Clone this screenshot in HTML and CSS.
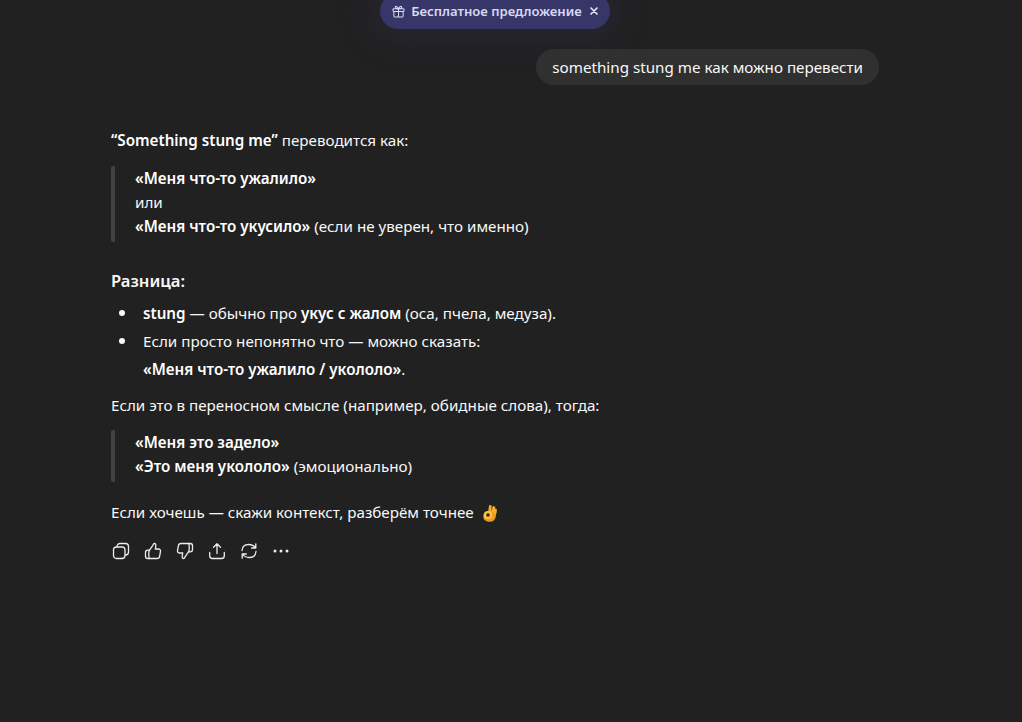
FILE: index.html
```html
<!DOCTYPE html>
<html lang="ru">
<head>
<meta charset="utf-8">
<title>Chat</title>
<link rel="stylesheet" href="styles.css">
</head>
<body>
<main class="page">
  <div class="promo">
    <svg class="promo-icon" viewBox="0 0 14 14" fill="none" stroke="currentColor" stroke-width="1.1" stroke-linecap="round" stroke-linejoin="round"><rect x="1" y="4" width="12" height="3" rx="1"/><path d="M2 7v4.500A1.500 1.500 0 0 0 3.500 13h7a1.500 1.500 0 0 0 1.500-1.500V7M7 4v9M7 4C6 1.500 3.500.5 3.500 2.300 3.500 3.500 5.500 4 7 4ZM7 4c1-2.500 3.500-3.500 3.500-1.700C10.500 3.500 8.500 4 7 4Z"/></svg>
    <span class="promo-text">Бесплатное предложение</span>
    <svg class="promo-close" viewBox="0 0 8 8" fill="none" stroke="currentColor" stroke-width="1.600" stroke-linecap="round"><path d="M1 1l6 6M7 1L1 7"/></svg>
  </div>
  <div class="thread">
    <div class="user-row"><div class="bubble">something stung me как можно перевести</div></div>
    <article class="answer">
      <p class="intro"><b>“Something stung me”</b> переводится как:</p>
      <blockquote class="quote"><b>«Меня что-то ужалило»</b><br>или<br><b>«Меня что-то укусило»</b> (если не уверен, что именно)</blockquote>
      <h3 class="heading">Разница:</h3>
      <ul class="list">
        <li class="item"><b>stung</b> — обычно про <b>укус с жалом</b> (оса, пчела, медуза).</li>
        <li class="item">Если просто непонятно что — можно сказать:<br><b>«Меня что-то ужалило / укололо»</b>.</li>
      </ul>
      <p class="para">Если это в переносном смысле (например, обидные слова), тогда:</p>
      <blockquote class="quote quote-second"><b>«Меня это задело»</b><br><b>«Это меня укололо»</b> (эмоционально)</blockquote>
      <p class="closing">Если хочешь — скажи контекст, разберём точнее <svg class="emoji" viewBox="0 0 15 18" fill="none" stroke-linecap="round"><path fill="#f09a26" d="M3.500 8 12 5.500l2.300 3-.6 4.500c-.5 3-2.800 4.800-5.700 4.800-3.700 0-6.700-2-6.700-5.400C1.300 10.500 2 9 3.500 8Z"/><path stroke="#f6ab2e" stroke-width="2.800" d="M7.500 8 8.300 2.500M10.800 7l1-3.500M13.200 8.500l.3-2.500"/><circle cx="6" cy="11" r="3" stroke="#fdc83c" stroke-width="2.200"/><circle cx="6" cy="11" r="1.800" fill="#3a2c18"/></svg></p>
      <div class="actions">
        <button class="action" aria-label="Копировать"><svg viewBox="0 0 18 18" fill="none" stroke="currentColor" stroke-width="1.300" stroke-linejoin="round"><rect x="1.500" y="5" width="11.500" height="11.500" rx="3"/><path d="M5 5V4.500a3 3 0 0 1 3-3h5.500a3 3 0 0 1 3 3V10a3 3 0 0 1-3 3H13"/></svg></button>
        <button class="action" aria-label="Нравится"><svg viewBox="0 0 18 18" fill="none" stroke="currentColor" stroke-width="1.300" stroke-linecap="round" stroke-linejoin="round"><path d="M5.500 8.200 8.700 3.600c.4-.9.800-2.100 1.700-2.100 1.200 0 1.600 1.300 1.400 2.500L11.300 7h3.200c1.300 0 2.200 1.100 2 2.300l-.9 5c-.2 1.300-1.100 2.200-2.500 2.200H5.500"/><path d="M5.500 8.200H3.700c-1.200 0-2.200 1-2.200 2.200v3.900c0 1.200 1 2.200 2.200 2.200h1.800c-1-.9-1-7.400 0-8.300Z"/></svg></button>
        <button class="action" aria-label="Не нравится"><svg viewBox="0 0 18 18" fill="none" stroke="currentColor" stroke-width="1.300" stroke-linecap="round" stroke-linejoin="round"><path d="M12.500 9.800 9.300 14.400c-.4.900-.8 2.100-1.700 2.100-1.200 0-1.600-1.300-1.400-2.500L6.700 11H3.500c-1.300 0-2.200-1.100-2-2.300l.9-5C2.600 2.400 3.500 1.500 4.900 1.500h7.600"/><path d="M12.500 9.800h1.800c1.200 0 2.200-1 2.200-2.200V3.700c0-1.200-1-2.200-2.200-2.200h-1.800c1 .9 1 7.400 0 8.300Z"/></svg></button>
        <button class="action" aria-label="Поделиться"><svg viewBox="0 0 18 18" fill="none" stroke="currentColor" stroke-width="1.300" stroke-linecap="round" stroke-linejoin="round"><path d="M9 11.500V1.800M5.500 5.200 9 1.700l3.500 3.500M1.700 10.500v3.300c0 1.500 1.200 2.700 2.700 2.700h9.200c1.500 0 2.700-1.200 2.700-2.700v-3.300"/></svg></button>
        <button class="action" aria-label="Повторить"><svg viewBox="0 0 18 18" fill="none" stroke="currentColor" stroke-width="1.300" stroke-linecap="round" stroke-linejoin="round"><path d="M2 8.500C2.300 5 4.800 2.500 8.500 2.500c3.100 0 5.500 1 7 3.500M15.800 1.800V6h-4.200M16 9.500c-.3 3.500-2.800 6-6.500 6-3.100 0-5.500-1-7-3.500M2.200 16.200V12h4.200"/></svg></button>
        <button class="action" aria-label="Ещё"><svg viewBox="0 0 18 18" fill="currentColor"><circle cx="3" cy="9" r="1.500"/><circle cx="9" cy="9" r="1.500"/><circle cx="15" cy="9" r="1.500"/></svg></button>
      </div>
    </article>
  </div>
</main>
</body>
</html>
```
FILE: styles.css
```css
* { box-sizing: border-box; }
html, body { margin: 0; height: 100%; overflow: hidden; }
body {
  background: #212121;
  color: #f8f8f8;
  font-family: "Noto Sans", "Open Sans", sans-serif;
  font-size: 15.2px;
  line-height: 24px;
}
.page {
  width: 990px;
  display: flex;
  flex-direction: column;
  align-items: center;
}
.promo {
  width: 230px;
  height: 36px;
  margin-top: -7px;
  border-radius: 18px;
  background: #373669;
  color: #d9d9f6;
  display: flex;
  align-items: center;
  justify-content: center;
  gap: 6px;
  box-shadow: 0 0 36px 10px rgba(55, 54, 105, .24);
}
.promo-icon { width: 13px; height: 13px; flex: none; }
.promo-text { font-size: 13.1px; font-weight: 600; line-height: 20px; }
.promo-close { width: 8px; height: 8px; margin-left: 2px; color: #ecebfb; flex: none; }
.thread { width: 768px; padding-top: 20px; }
.user-row { display: flex; justify-content: flex-end; }
.bubble {
  height: 36px;
  padding: 6px 16px;
  border-radius: 18px;
  background: #303030;
}
.answer { padding-top: 43px; }
.intro { margin: 0; }
.quote {
  margin: 14px 0 0;
  padding: 0 0 4px 20px;
  border-left: 4px solid #424242;
  border-radius: 2px;
}
.heading { margin: 24px 0 0; font-size: 16.6px; font-weight: 600; line-height: 30px; }
.list { margin: 3px 0 0; padding: 0 0 0 32px; list-style: none; }
.item { line-height: 28px; position: relative; }
.item::before {
  content: "";
  position: absolute;
  left: -24px;
  top: 11px;
  width: 6px;
  height: 6px;
  border-radius: 50%;
  background: #f8f8f8;
}
.para { margin: 10px 0 0; }
.quote-second { margin-top: 13px; }
.closing { margin: 18px 0 0; }
b { font-weight: 600; color: #fff; }
.emoji { width: 15px; height: 18px; vertical-align: -4px; margin-left: 4px; }
.actions { display: flex; gap: 14px; margin-top: 18px; padding-left: 1px; color: #ededed; }
.action {
  width: 18px;
  height: 18px;
  padding: 0;
  border: 0;
  background: none;
  color: inherit;
}
.action svg { display: block; width: 18px; height: 18px; }
```
